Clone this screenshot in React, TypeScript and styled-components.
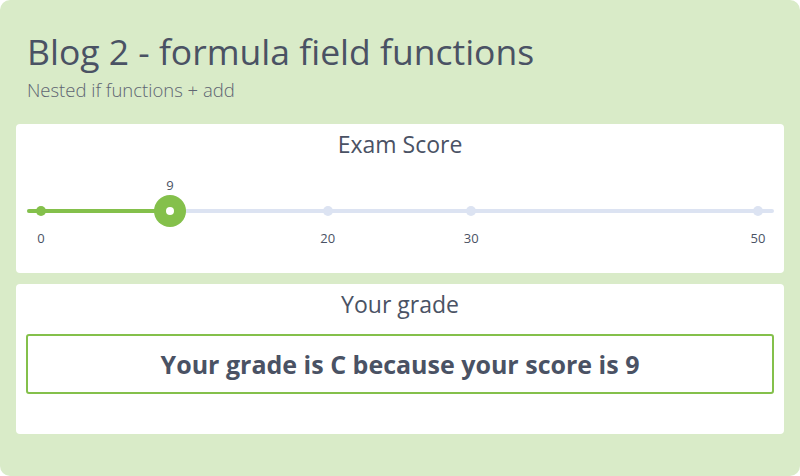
import React from "react";
import styled, { createGlobalStyle } from "styled-components";

const GlobalStyle = createGlobalStyle`
  html, body {
    margin: 0;
    padding: 0;
    background: #ffffff;
  }
  body {
    font-family: "Open Sans", "Noto Sans", sans-serif;
    color: #4a5264;
  }
`;

const Page = styled.div`
  width: 800px;
  height: 476px;
  box-sizing: border-box;
  background: #d9ebc8;
  border-radius: 10px;
  padding: 30px 16px 42px;
  display: flex;
  flex-direction: column;
`;

const Header = styled.header`
  padding: 0 11px;
  margin-bottom: 22px;
`;

const Title = styled.h1`
  margin: 0;
  font-size: 35.5px;
  font-weight: 400;
  line-height: 42px;
  color: #4a5264;
`;

const Subtitle = styled.div`
  font-size: 18.5px;
  font-weight: 300;
  line-height: 24px;
  color: #5e6572;
  margin-top: 6px;
`;

const Card = styled.section<{ $height: number }>`
  background: #ffffff;
  border-radius: 4px;
  height: ${(p) => p.$height}px;
  box-sizing: border-box;
  padding: 5px 10px 0;
  display: flex;
  flex-direction: column;
  & + & {
    margin-top: 11px;
  }
`;

const CardTitle = styled.h2`
  margin: 0;
  text-align: center;
  font-size: 23px;
  font-weight: 400;
  line-height: 30px;
  color: #4a5264;
`;

const SliderWrap = styled.div`
  display: flex;
  flex-direction: column;
  margin: 18px 0 0 1px;
  width: 747px;
`;

const LabelRow = styled.div<{ $gap: number }>`
  position: relative;
  height: 16px;
  margin-top: ${(p) => p.$gap}px;
`;

const Rail = styled.div`
  position: relative;
  height: 32px;
  margin-top: 2px;
  display: flex;
  align-items: center;
`;

const Track = styled.div`
  flex: 1;
  height: 4px;
  border-radius: 2px;
  background: #dce3f2;
  overflow: hidden;
`;

const Fill = styled.div`
  height: 100%;
  background: #84c04b;
`;

const Tick = styled.span<{ $on: boolean }>`
  position: absolute;
  top: 11px;
  width: 10px;
  height: 10px;
  margin-left: -5px;
  border-radius: 50%;
  background: ${(p) => (p.$on ? "#84c04b" : "#dce3f2")};
`;

const Thumb = styled.span`
  position: absolute;
  top: 0;
  width: 32px;
  height: 32px;
  margin-left: -16px;
  border-radius: 50%;
  background: #84c04b;
  display: flex;
  align-items: center;
  justify-content: center;
  &::after {
    content: "";
    width: 8px;
    height: 8px;
    border-radius: 50%;
    background: #ffffff;
  }
`;

const Label = styled.span`
  position: absolute;
  top: 0;
  width: 40px;
  margin-left: -20px;
  text-align: center;
  font-size: 13px;
  line-height: 16px;
  color: #4a5264;
`;

const ResultBox = styled.div`
  margin-top: 15px;
  height: 60px;
  box-sizing: border-box;
  border: 2px solid #84c04b;
  border-radius: 3px;
  display: flex;
  align-items: center;
  justify-content: center;
  font-size: 25px;
  font-weight: 700;
  color: #4a5264;
`;

const MIN = 0;
const MAX = 50;
const ticks = [0, 20, 30, 50];

const pos = (v: number) =>
  `calc(14px + (100% - 30px) * ${(v - MIN) / (MAX - MIN)})`;

const Slider = ({ value }: { value: number }) => (
  <SliderWrap>
    <LabelRow $gap={0}>
      <Label style={{ left: pos(value) }}>{value}</Label>
    </LabelRow>
    <Rail>
      <Track>
        <Fill style={{ width: pos(value) }} />
      </Track>
      {ticks.map((t) => (
        <Tick key={t} $on={t <= value} style={{ left: pos(t) }} />
      ))}
      <Thumb style={{ left: pos(value) }} />
    </Rail>
    <LabelRow $gap={3}>
      {ticks.map((t) => (
        <Label key={t} style={{ left: pos(t) }}>
          {t}
        </Label>
      ))}
    </LabelRow>
  </SliderWrap>
);

const App = () => {
  const score = 9;
  return (
    <>
      <GlobalStyle />
      <Page>
        <Header>
          <Title>Blog 2 - formula field functions</Title>
          <Subtitle>Nested if functions + add</Subtitle>
        </Header>
        <Card $height={149}>
          <CardTitle>Exam Score</CardTitle>
          <Slider value={score} />
        </Card>
        <Card $height={150}>
          <CardTitle>Your grade</CardTitle>
          <ResultBox>Your grade is C because your score is {score}</ResultBox>
        </Card>
      </Page>
    </>
  );
};

export default App;
